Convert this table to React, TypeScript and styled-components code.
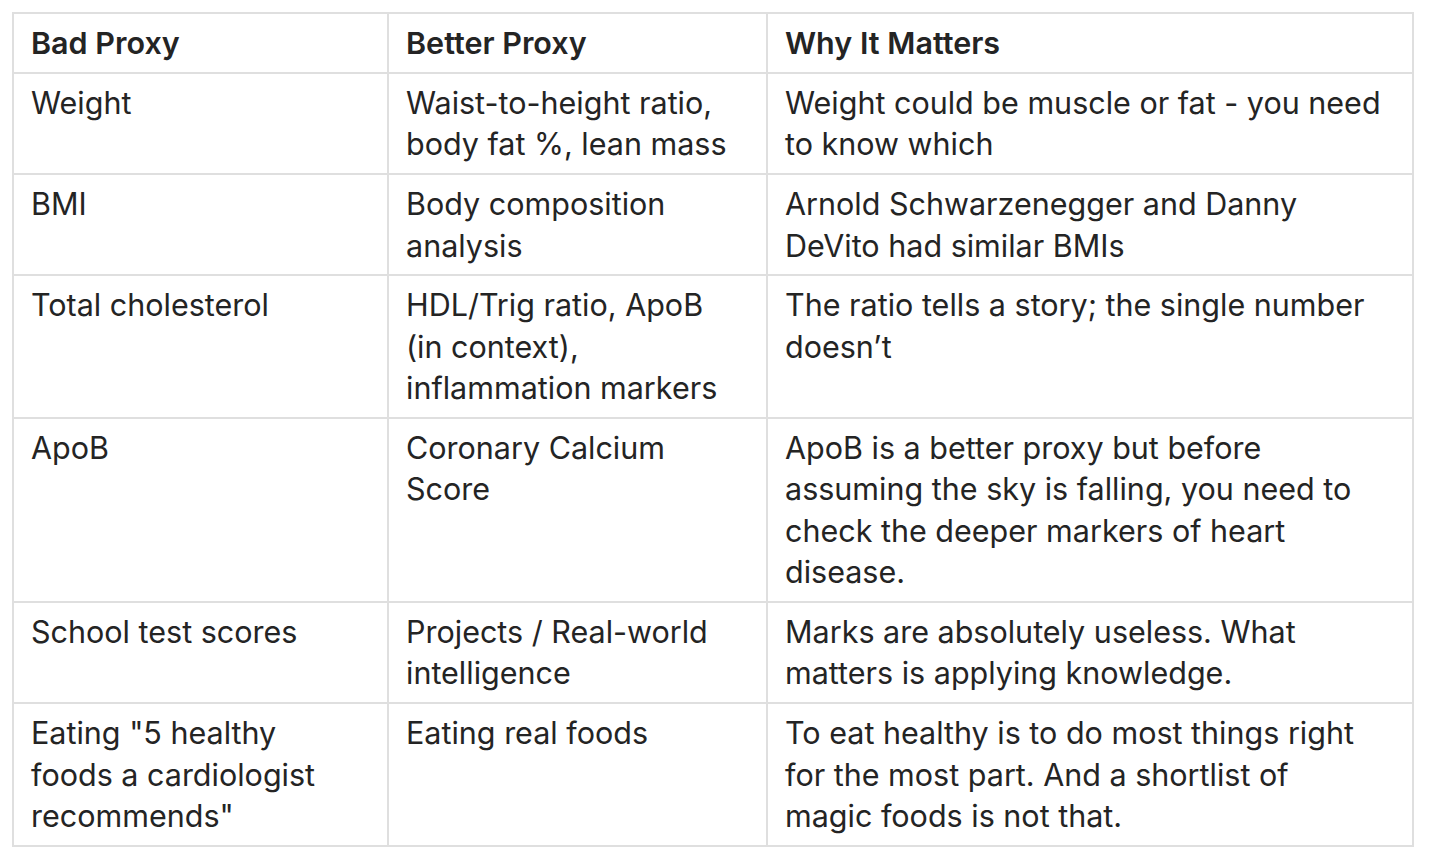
import styled, { createGlobalStyle } from "styled-components"

const GlobalStyle = createGlobalStyle`
  html, body {
    margin: 0;
    padding: 0;
    background: #ffffff;
  }
  body {
    font-family: Inter, "Noto Sans", "Liberation Sans", sans-serif;
    color: #242424;
  }
`

const Style = {
  Page: styled.div`
    padding: 12px;
  `,
  Table: styled.table`
    width: 1400px;
    border-collapse: collapse;
    table-layout: fixed;
    font-size: 30.5px;
    line-height: 41.4px;
  `,
  Head: styled.th`
    text-align: left;
    font-weight: 600;
    padding: 8.2px 30px 8.2px 17px;
    border: 2px solid #dfdfdf;
    vertical-align: top;
  `,
  Cell: styled.td`
    padding: 8.2px 30px 8.2px 17px;
    border: 2px solid #dfdfdf;
    vertical-align: top;
  `,
}

const rows = [
  ["Weight", "Waist-to-height ratio, body fat %, lean mass", "Weight could be muscle or fat - you need to know which"],
  ["BMI", "Body composition analysis", "Arnold Schwarzenegger and Danny DeVito had similar BMIs"],
  ["Total cholesterol", "HDL/Trig ratio, ApoB (in context), inflammation markers", "The ratio tells a story; the single number doesn\u2019t"],
  ["ApoB", "Coronary Calcium Score", "ApoB is a better proxy but before assuming the sky is falling, you need to check the deeper markers of heart disease."],
  ["School test scores", "Projects / Real-world intelligence", "Marks are absolutely useless. What matters is applying knowledge."],
  ["Eating \"5 healthy foods a cardiologist recommends\"", "Eating real foods", "To eat healthy is to do most things right for the most part. And a shortlist of magic foods is not that."],
]

export default function App() {
  return (
    <>
      <GlobalStyle />
      <Style.Page>
        <Style.Table>
          <colgroup>
            <col style={{ width: 375 }} />
            <col style={{ width: 379 }} />
            <col style={{ width: 646 }} />
          </colgroup>
          <thead>
            <tr>
              <Style.Head>Bad Proxy</Style.Head>
              <Style.Head>Better Proxy</Style.Head>
              <Style.Head>Why It Matters</Style.Head>
            </tr>
          </thead>
          <tbody>
            {rows.map((row) => (
              <tr key={row[0]}>
                {row.map((text, i) => (
                  <Style.Cell key={i}>{text}</Style.Cell>
                ))}
              </tr>
            ))}
          </tbody>
        </Style.Table>
      </Style.Page>
    </>
  )
}
